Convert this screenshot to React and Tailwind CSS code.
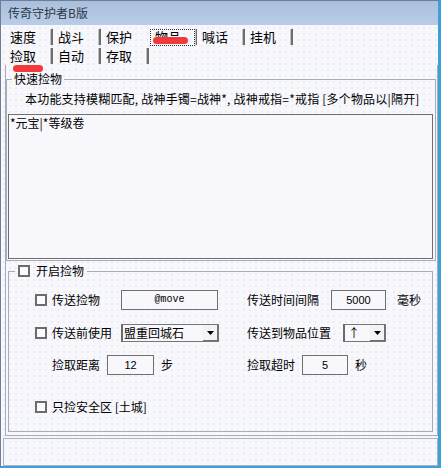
import React from 'react';

const dots = 'bg-[#f8f7fb] bg-[radial-gradient(circle,#d2e1f4_0.6px,transparent_0.8px)] bg-[length:6px_6px]';

function Check() {
    return <span className="inline-block w-[12px] h-[12px] border-2 border-[#6c6c6c] bg-[#fbfbfd] shrink-0" />;
}

function Tab({ label, sep = true, className = '' }) {
    return (
        <div className={`w-[48px] h-full flex items-center justify-between ${className}`}>
            <span className="ml-[5px]">{label}</span>
            {sep ? (
                <span className="w-[3px] h-[16px] border-l border-[#c4c4c4] bg-[#6e6e6e]" />
            ) : (
                <span className="w-[3px]" />
            )}
        </div>
    );
}

function Arrow() {
    return (
        <svg width="7" height="4" viewBox="0 0 7 4">
            <polygon points="0,0 7,0 3.5,4" fill="#000" />
        </svg>
    );
}

function Combo({ width, text }) {
    return (
        <div className={`flex h-[18px] border border-[#767676] border-l-2 border-l-[#6a6a6a] bg-[#f8f7fb] ${width}`}>
            <span className="flex-1 pl-[1px] leading-[16px] whitespace-nowrap overflow-hidden">{text}</span>
            <span className="w-[15px] flex items-center justify-center bg-[#f3f3f5] border-r border-b border-[#707070]">
                <Arrow />
            </span>
        </div>
    );
}

function Box({ width, children, className = '' }) {
    return (
        <div className={`h-[20px] border border-[#707070] bg-[#f8f7fb] flex items-center justify-center ${width} ${className}`}>
            {children}
        </div>
    );
}

export default function App() {
    return (
        <div className="w-[441px] h-[468px] flex flex-col border-l border-t border-[#6e7e94] border-r-[3px] border-r-[#3f9fd8] border-b-2 border-b-[#3f9fd8] font-['Noto_Sans_CJK_SC',sans-serif] text-[12px] leading-[14px] text-black overflow-hidden">
            {/* title bar */}
            <div className="h-[24px] shrink-0 flex items-center pl-[7px] bg-gradient-to-b from-[#a9bfdc] to-[#b9cde8] text-[#2c3746] text-[12px]">
                传奇守护者B版
            </div>

            <div className={`flex-1 flex flex-col ${dots}`}>
                {/* tabs */}
                <div className="relative pt-[3px] pl-[4px] text-[13px]">
                    <div className="flex h-[18px]">
                        <Tab label="速度" />
                        <Tab label="战斗" />
                        <Tab label="保护" sep={false} />
                        <div className="w-[48px] h-full flex items-center justify-between">
                            <span className="ml-px h-[17px] w-[46px] border border-dotted border-[#333] flex items-center pl-[4px]">物品</span>
                            <span className="w-[2px] h-[16px] border-l border-[#c4c4c4] bg-[#6e6e6e]" />
                        </div>
                        <Tab label="喊话" />
                        <Tab label="挂机" />
                    </div>
                    <div className="flex h-[18px] mt-px">
                        <Tab label="捡取" />
                        <Tab label="自动" />
                        <Tab label="存取" />
                    </div>
                    <span className="absolute left-[152px] top-[12px] w-[35px] h-[7px] rounded-full bg-[#f23a3a]" />
                    <span className="absolute left-[12px] top-[40px] w-[30px] h-[7px] rounded-full bg-[#f23a3a]" />
                </div>

                {/* tab page */}
                <div className="ml-[4px] h-[371px] border-l border-r border-b border-[#a4adba] pt-[7px] flex flex-col">
                    <fieldset className="h-[189px] mr-px border border-[#a4adba] flex flex-col">
                        <legend className="ml-[5px] px-[2px] leading-[14px]">快速捡物</legend>
                        <div className="mt-[6px] pl-[18px] whitespace-nowrap tracking-[0.2px]">本功能支持模糊匹配, 战神手镯=战神*, 战神戒指=*戒指 [多个物品以|隔开]</div>
                        <div className="mt-[8px] ml-px mr-[2px] h-[145px] border border-[#6e6e6e] bg-[#f8f7fb] pl-px pt-[1px]">
                            *元宝|*等级卷
                        </div>
                    </fieldset>

                    <fieldset className="h-[168px] mt-[3px] ml-[2px] mr-[4px] border border-[#a4adba]">
                        <legend className="ml-[6px] px-[3px] flex items-center gap-[6px] leading-[14px]">
                            <Check />
                            <span>开启捡物</span>
                        </legend>

                        <div className="pl-[26px] flex flex-col">
                            <div className="mt-[12px] flex items-center h-[20px]">
                                <div className="w-[212px] flex items-center">
                                    <div className="w-[86px] flex items-center gap-[5px]">
                                        <Check />
                                        <span>传送捡物</span>
                                    </div>
                                    <Box width="w-[97px]">
                                        <span className="font-['Liberation_Mono',monospace] text-[10px]">@move</span>
                                    </Box>
                                </div>
                                <span className="w-[84px]">传送时间间隔</span>
                                <Box width="w-[55px]">
                                    <span className="font-['Liberation_Sans',sans-serif] text-[11px]">5000</span>
                                </Box>
                                <span className="ml-[11px]">毫秒</span>
                            </div>

                            <div className="mt-[14px] flex items-center h-[18px]">
                                <div className="w-[212px] flex items-center">
                                    <div className="w-[86px] flex items-center gap-[5px]">
                                        <Check />
                                        <span>传送前使用</span>
                                    </div>
                                    <Combo width="w-[98px]" text="盟重回城石" />
                                </div>
                                <span className="w-[96px]">传送到物品位置</span>
                                <Combo width="w-[43px]" text={<span className="pl-[2px]">↑</span>} />
                            </div>

                            <div className="mt-[13px] flex items-center h-[20px]">
                                <div className="w-[212px] flex items-center pl-[17px]">
                                    <span className="w-[55px]">捡取距离</span>
                                    <Box width="w-[47px]">
                                        <span className="font-['Liberation_Sans',sans-serif] text-[11px]">12</span>
                                    </Box>
                                    <span className="ml-[7px]">步</span>
                                </div>
                                <span className="w-[55px]">捡取超时</span>
                                <Box width="w-[46px]">
                                    <span className="font-['Liberation_Sans',sans-serif] text-[11px]">5</span>
                                </Box>
                                <span className="ml-[7px]">秒</span>
                            </div>

                            <div className="mt-[25px] flex items-center gap-[5px]">
                                <Check />
                                <span>只捡安全区 [土城]</span>
                            </div>
                        </div>
                    </fieldset>
                </div>

                {/* status bar */}
                <div className="mt-[2px] ml-[2px] h-[28px] border border-[#a9b2c0]" />
            </div>
        </div>
    );
}
